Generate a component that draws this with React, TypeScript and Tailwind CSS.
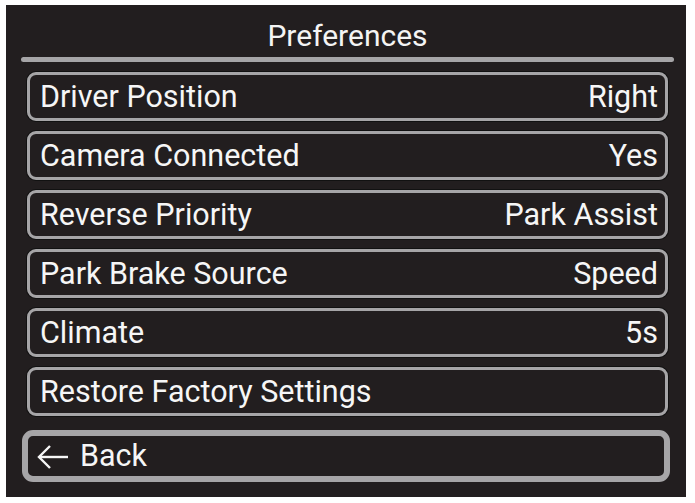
import React from "react";

const rows: [string, string][] = [
  ["Driver Position", "Right"],
  ["Camera Connected", "Yes"],
  ["Reverse Priority", "Park Assist"],
  ["Park Brake Source", "Speed"],
  ["Climate", "5s"],
  ["Restore Factory Settings", ""],
];

export default function App() {
  return (
    <div className="w-[695px] h-[503px] bg-white pl-[6px] pt-[5px]" style={{ fontFamily: "Roboto, 'Liberation Sans', sans-serif" }}>
      <div className="w-[680px] h-[492px] bg-[#221e1f] flex flex-col pl-[21px] pr-[18px]">
        <div className="h-[52px] flex items-end justify-center text-[30px] leading-none text-[#f4f4f4] pb-[6px]">
          Preferences
        </div>
        <div className="h-[5px] -ml-[6px] w-[653px] rounded-full bg-[#a6a5a7]" />
        <div className="flex flex-col gap-[10px] mt-[10px]">
          {rows.map(([l, r]) => (
            <div
              key={l}
              className="h-[49px] rounded-[9px] border-[3px] border-[#a6a5a7] shadow-[0_0_0_1px_#111] flex items-center justify-between pl-[10px] pr-[7px] pt-[1px] text-[30.5px] text-[#f6f6f6] leading-none"
            >
              <span>{l}</span>
              <span>{r}</span>
            </div>
          ))}
        </div>
        <div className="mt-[14px] -ml-[5px] -mr-[2px] h-[52px] rounded-[11px] border-[6px] border-[#a6a5a7] flex items-center pl-[9px] pt-[1px] text-[30.5px] text-[#f6f6f6] leading-none gap-[11px]">
          <svg width="32" height="24" viewBox="0 0 32 24" fill="none" stroke="#f6f6f6" strokeWidth="2.4" strokeLinecap="butt">
            <path d="M31 12H2" />
            <path d="M13 1L2 12l11 11" />
          </svg>
          <span>Back</span>
        </div>
      </div>
    </div>
  );
}
